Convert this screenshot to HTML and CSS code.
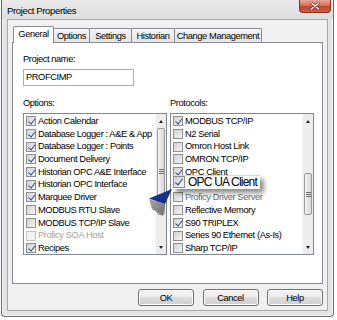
FILE: index.html
```html
<!DOCTYPE html>
<html>
<head>
<meta charset="utf-8">
<link rel="stylesheet" href="styles.css">
</head>
<body>
<div class="window">
  <div class="titlebar">
    <span class="title">Project Properties</span>
    <div class="close"><svg width="10" height="8" viewBox="0 0 10 8"><path d="M1.5 1 L8.5 7 M8.5 1 L1.5 7" stroke="#5a1d14" stroke-width="2.6" stroke-linecap="round"/><path d="M1.5 1 L8.5 7 M8.5 1 L1.5 7" stroke="#fff" stroke-width="1.6" stroke-linecap="round"/></svg></div>
  </div>
  <div class="client">
    <div class="tabs">
      <div class="tab active t-general">General</div>
      <div class="tab t-options">Options</div>
      <div class="tab t-settings">Settings</div>
      <div class="tab t-historian">Historian</div>
      <div class="tab t-change">Change Management</div>
    </div>
    <div class="panel">
      <div class="label">Project name:</div>
      <div class="input">PROFCIMP</div>
      <div class="lists">
        <div class="group">
          <div class="label lbl-list">Options:</div>
          <div class="listbox">
            <div class="items">
              <div class="row"><span class="cb on"></span>Action Calendar</div>
              <div class="row"><span class="cb on"></span>Database Logger : A&amp;E &amp; App</div>
              <div class="row"><span class="cb on"></span>Database Logger : Points</div>
              <div class="row"><span class="cb on"></span>Document Delivery</div>
              <div class="row"><span class="cb on"></span>Historian OPC A&amp;E Interface</div>
              <div class="row"><span class="cb on"></span>Historian OPC Interface</div>
              <div class="row"><span class="cb on"></span>Marquee Driver</div>
              <div class="row"><span class="cb"></span>MODBUS RTU Slave</div>
              <div class="row"><span class="cb"></span>MODBUS TCP/IP Slave</div>
              <div class="row disabled"><span class="cb"></span>Proficy SOA Host</div>
              <div class="row"><span class="cb on"></span>Recipes</div>
            </div>
            <div class="scrollbar">
              <div class="arrow-btn"><span class="tri up"></span></div>
              <div class="track"><div class="thumb thumb-options"><span class="grip"></span></div></div>
              <div class="arrow-btn"><span class="tri down"></span></div>
            </div>
          </div>
        </div>
        <div class="group">
          <div class="label lbl-list">Protocols:</div>
          <div class="listbox">
            <div class="items">
              <div class="row"><span class="cb on"></span>MODBUS TCP/IP</div>
              <div class="row"><span class="cb"></span>N2 Serial</div>
              <div class="row"><span class="cb"></span>Omron Host Link</div>
              <div class="row"><span class="cb"></span>OMRON TCP/IP</div>
              <div class="row"><span class="cb on"></span>OPC Client</div>
              <div class="row zoomed">
                <div class="callout"><span class="cb on big"></span><span class="callout-text">OPC UA Client</span></div>
              </div>
              <div class="row dim"><span class="cb"></span>Proficy Driver Server</div>
              <div class="row"><span class="cb"></span>Reflective Memory</div>
              <div class="row"><span class="cb on"></span>S90 TRIPLEX</div>
              <div class="row"><span class="cb"></span>Series 90 Ethernet (As-Is)</div>
              <div class="row"><span class="cb"></span>Sharp TCP/IP</div>
            </div>
            <div class="scrollbar">
              <div class="arrow-btn"><span class="tri up"></span></div>
              <div class="track"><div class="thumb thumb-protocols"><span class="grip"></span></div></div>
              <div class="arrow-btn"><span class="tri down"></span></div>
            </div>
          </div>
        </div>
      </div>
    </div>
    <div class="buttons">
      <div class="btn">OK</div>
      <div class="btn">Cancel</div>
      <div class="btn">Help</div>
    </div>
  </div>
</div>

<svg class="pointer" width="40" height="36" viewBox="0 0 40 36">
  <defs>
    <linearGradient id="g1" x1="0" y1="0" x2="1" y2="1">
      <stop offset="0" stop-color="#a8a8a8"/>
      <stop offset="1" stop-color="#6e6e6e"/>
    </linearGradient>
  </defs>
  <polygon points="9,14 25,19 23,31 12,24" fill="url(#g1)"/>
  <polygon points="32,4 9,13.5 25,19" fill="#15308c"/>
</svg>
</body>
</html>
```
FILE: styles.css
```css
* { box-sizing: border-box; }

body {
  margin: 0;
  width: 337px;
  height: 320px;
  overflow: hidden;
  position: relative;
  background: #fff;
  font-family: "Liberation Sans", Arial, sans-serif;
  font-size: 9.3px;
  letter-spacing: -0.4px;
  color: #000;
}

.window {
  margin-left: 1px;
  width: 333px;
  height: 317px;
  border: 1px solid #6b6b6b;
  border-top: none;
  border-radius: 0 0 4px 4px;
  background: #e4e4e4;
  box-shadow: inset 1px 0 0 #f7f7f7, inset -1px 0 0 #f7f7f7, inset 0 -1px 0 #f7f7f7;
  display: flex;
  flex-direction: column;
}

.titlebar {
  height: 19px;
  display: flex;
  align-items: flex-start;
  background: linear-gradient(#eaeaea, #dedede);
}

.title {
  padding: 3px 0 0 5px;
  line-height: 16px;
  font-size: 9.6px;
}

.close {
  margin-left: auto;
  margin-right: 2px;
  width: 32px;
  height: 13px;
  border: 1px solid #8a3325;
  border-top: none;
  border-radius: 0 0 4px 4px;
  background: linear-gradient(#e9a797, #d6725c 45%, #c24530 55%, #cf5c44);
  display: flex;
  align-items: center;
  justify-content: center;
}

.client {
  margin: 0 5px;
  width: 321px;
  height: 292px;
  border: 1px solid #a8a8a8;
  background: #f0f0f0;
  padding: 6px 4px 0 4px;
}

.tabs {
  display: flex;
  align-items: flex-end;
  height: 16px;
  padding-left: 1px;
}

.tab {
  position: relative;
  height: 14px;
  border: 1px solid #898c95;
  border-bottom: none;
  border-radius: 2px 2px 0 0;
  background: linear-gradient(#f5f5f5, #e4e4e4);
  display: flex;
  align-items: center;
  justify-content: center;
  margin-left: -1px;
  padding-top: 1px;
}

.tab.active {
  height: 17px;
  margin-bottom: -1px;
  background: #fff;
  z-index: 2;
  padding-top: 0;
  padding-bottom: 2px;
  margin-left: 0;
}

.t-general { width: 41px; }
.t-options { width: 37px; }
.t-settings { width: 43px; }
.t-historian { width: 44px; }
.t-change { width: 88px; }

.panel {
  position: relative;
  z-index: 1;
  height: 242px;
  border: 1px solid #898c95;
  background: #fff;
  padding: 10px 8px 0 10px;
}

.label {
  line-height: 12px;
  height: 12px;
}

.input {
  margin-top: 4px;
  width: 111px;
  height: 17px;
  border: 1px solid #abadb3;
  padding-left: 2px;
  line-height: 15px;
}

.lists {
  display: flex;
  gap: 3px;
  margin-top: 11px;
}

.group { width: 144px; }

.lbl-list { margin-bottom: 4px; }

.listbox {
  height: 142px;
  border: 1px solid #828790;
  display: flex;
}

.items {
  flex: 1;
  padding-top: 1px;
  padding-left: 2px;
  white-space: nowrap;
}

.row {
  height: 12.7px;
  line-height: 12.7px;
  display: flex;
  align-items: center;
  gap: 2px;
}

.row.zoomed {
  position: relative;
  z-index: 5;
}

.row.disabled { color: #a3a3a3; }
.row.dim { color: #6a6a6a; }

.cb {
  position: relative;
  flex: none;
  width: 10px;
  height: 10px;
  border: 1px solid #8f8f8f;
  background: linear-gradient(135deg, #d2d2d2, #f4f4f4);
}

.row.disabled .cb { border-color: #c4c4c4; background: #f2f2f2; }

.cb.on::after {
  content: "";
  position: absolute;
  left: 2.6px;
  top: 0px;
  width: 2.6px;
  height: 5.6px;
  border: solid #27439e;
  border-width: 0 1.6px 1.6px 0;
  transform: rotate(38deg);
}

.scrollbar {
  width: 11px;
  display: flex;
  flex-direction: column;
  background: #ededed;
  border-left: 1px solid #f7f7f7;
}

.arrow-btn {
  height: 14px;
  display: flex;
  align-items: center;
  justify-content: center;
}

.tri {
  width: 0;
  height: 0;
  border-left: 2.5px solid transparent;
  border-right: 2.5px solid transparent;
}
.tri.up { border-bottom: 3px solid #222; }
.tri.down { border-top: 3px solid #222; }

.track { flex: 1; padding: 0 1px; }

.thumb {
  border: 1px solid #9c9c9c;
  border-radius: 2px;
  background: linear-gradient(90deg, #f4f4f4, #e2e2e2 60%, #d8d8d8);
  display: flex;
  align-items: center;
  justify-content: center;
}

.thumb-options { height: 87px; }
.thumb-protocols { margin-top: 45px; height: 42px; }

.grip {
  width: 5px;
  height: 5px;
  background: repeating-linear-gradient(#6d6d6d 0 1px, transparent 1px 2px);
}

.buttons {
  display: flex;
  justify-content: flex-end;
  gap: 8.5px;
  margin-top: 5px;
}

.btn {
  width: 56px;
  height: 17px;
  border: 1px solid #707070;
  border-radius: 3px;
  background: linear-gradient(#f3f3f3 0, #ebebeb 50%, #dddddd 50%, #cfcfcf 100%);
  box-shadow: inset 0 0 0 1px #fbfbfb;
  display: flex;
  align-items: center;
  justify-content: center;
}

.callout {
  position: absolute;
  left: -1px;
  top: -3.5px;
  width: 88px;
  height: 14px;
  background: #fff;
  border-top: 1px solid #d8d8d8;
  box-shadow: 4px 4px 5px rgba(0, 0, 0, 0.45);
  display: flex;
  align-items: center;
  gap: 3px;
  padding-left: 1px;
}

.cb.big {
  width: 12px;
  height: 12px;
}

.cb.big::after {
  left: 3.4px;
  top: 0px;
  width: 3px;
  height: 7px;
  border-width: 0 1.9px 1.9px 0;
}

.callout-text {
  font-size: 12px;
  letter-spacing: -0.8px;
  line-height: 14px;
}

.pointer {
  position: absolute;
  left: 140px;
  top: 185px;
  z-index: 6;
}
```
